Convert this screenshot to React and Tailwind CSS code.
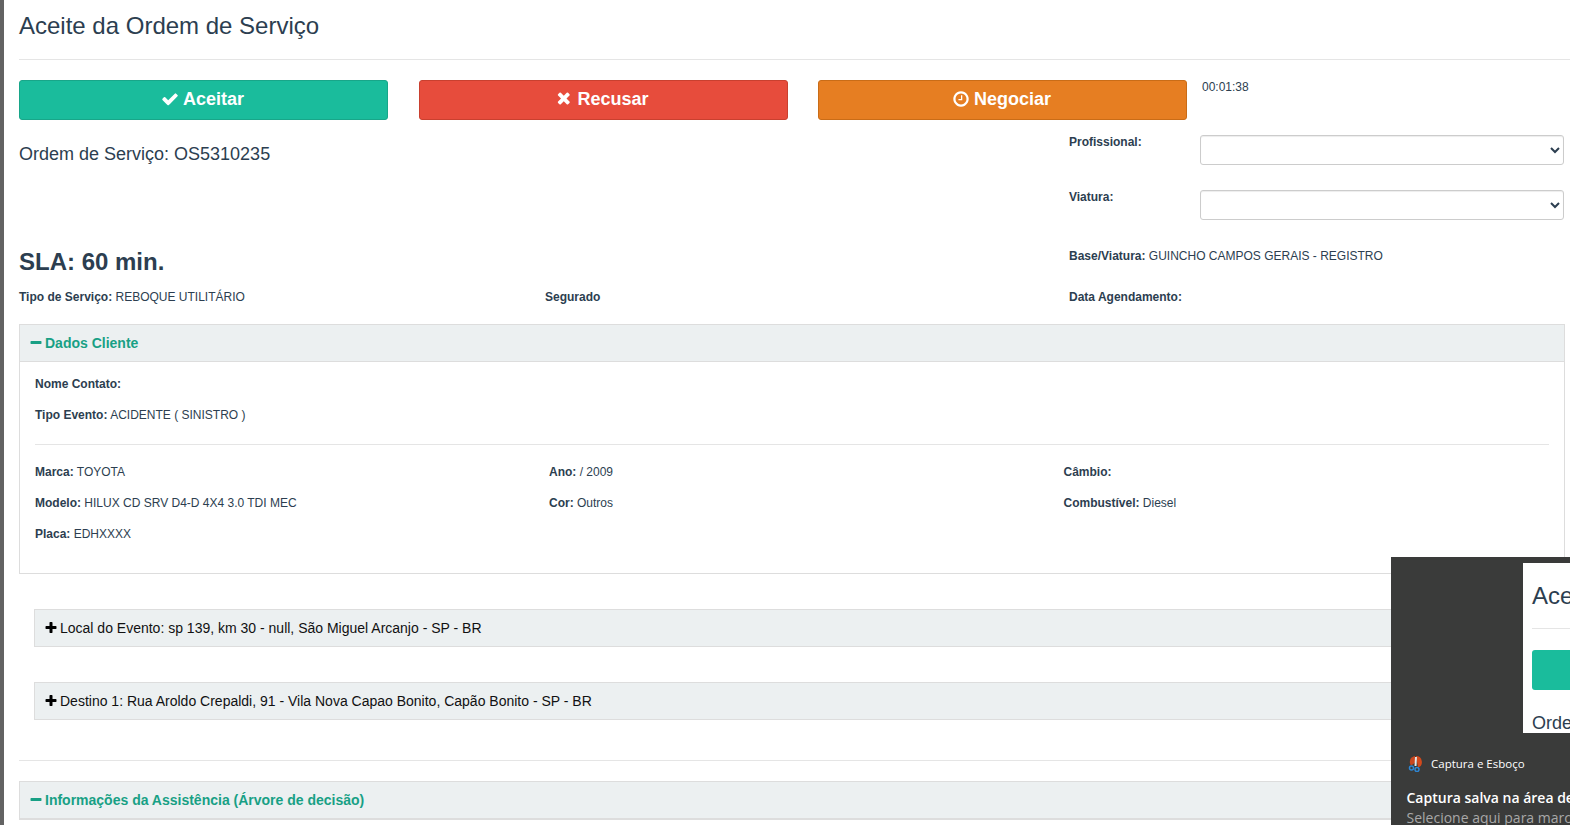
const FaIcon = ({ d, size, box = '0 0 1792 1792', className = '' }) => (
  <svg width={size} height={size} viewBox={box} fill="currentColor" className={`shrink-0 ${className}`}>
    <path d={d} />
  </svg>
);

const checkPath = 'M1671 566q0 40-28 68l-724 724-136 136q-28 28-68 28t-68-28l-136-136-362-362q-28-28-28-68t28-68l136-136q28-28 68-28t68 28l294 295 656-657q28-28 68-28t68 28l136 136q28 28 28 68z';
const timesPath = 'M1298 1214q0 40-28 68l-136 136q-28 28-68 28t-68-28l-294-294-294 294q-28 28-68 28t-68-28l-136-136q-28-28-28-68t28-68l294-294-294-294q-28-28-28-68t28-68l136-136q28-28 68-28t68 28l294 294 294-294q28-28 68-28t68 28l136 136q28 28 28 68t-28 68l-294 294 294 294q28 28 28 68z';
const clockPath = 'M896 544v448q0 14-9 23t-23 9h-320q-14 0-23-9t-9-23v-64q0-14 9-23t23-9h224v-352q0-14 9-23t23-9h64q14 0 23 9t9 23zm416 352q0-148-73-273t-198-198-273-73-273 73-198 198-73 273 73 273 198 198 273 73 273-73 198-198 73-273zm224 0q0 209-103 385.500t-279.500 279.500-385.500 103-385.500-103-279.500-279.500-103-385.500 103-385.500 279.500-279.500 385.500-103 385.500 103 279.500 279.500 103 385.500z';
const plusPath = 'M1600 736v192q0 40-28 68t-68 28h-416v416q0 40-28 68t-68 28h-192q-40 0-68-28t-28-68v-416h-416q-40 0-68-28t-28-68v-192q0-40 28-68t68-28h416v-416q0-40 28-68t68-28h192q40 0 68 28t28 68v416h416q40 0 68 28t28 68z';
const minusPath = 'M1600 736v192q0 40-28 68t-68 28h-1216q-40 0-68-28t-28-68v-192q0-40 28-68t68-28h1216q40 0 68 28t28 68z';

const Label = ({ label, value }) => (
  <div className="h-[31px] leading-[17px]">
    <strong className="font-bold">{label}</strong>{value ? ` ${value}` : ''}
  </div>
);

const ActionButton = ({ icon, text, className }) => (
  <button className={`w-[369px] h-[40px] mr-[30.5px] shrink-0 rounded-[3px] border text-white text-[18px] font-bold flex items-center justify-center gap-[4px] pb-[2px] pr-[2px] ${className}`}>
    {icon}
    {text}
  </button>
);

const SelectBox = () => (
  <select className="w-[364px] h-[30px] border border-[#cccccc] rounded-[3px] bg-white shadow-[inset_0_1px_1px_rgba(0,0,0,0.075)]" />
);

const CollapseBar = ({ text, className }) => (
  <div className={`mx-[15px] h-[38px] bg-[#ecf0f1] border border-[#dddddd] flex items-center pl-[9px] text-[14px] text-[#111111] ${className}`}>
    <FaIcon d={plusPath} size={14} className="mr-[2px] text-black" />
    {text}
  </div>
);

const SectionHeader = ({ title }) => (
  <div className="h-[37px] bg-[#ecf0f1] border-b border-[#dddddd] flex items-center pl-[9px] text-[14px] font-bold text-[#18a085]">
    <FaIcon d={minusPath} size={14} className="mr-[2px]" />
    {title}
  </div>
);

export default function App() {
  return (
    <div className="relative flex h-[825px] w-[1570px] overflow-hidden bg-white text-[12px] text-[#2c3e50] font-['Liberation_Sans',Arial,sans-serif]">
      <div className="w-[4px] shrink-0 bg-[#636363]" />

      <div className="flex-1 min-w-0">
        <div className="h-[60px] ml-[15px] border-b border-[#e5e5e5] flex items-center">
          <h4 className="text-[24px] font-normal relative -top-[4px]">Aceite da Ordem de Serviço</h4>
        </div>

        <div className="flex pl-[15px] mt-[20px] h-[40px]">
          <ActionButton className="bg-[#1abc9c] border-[#18a689]" icon={<FaIcon d={checkPath} size={18} />} text="Aceitar" />
          <ActionButton className="bg-[#e74c3c] border-[#c9402f]" icon={<FaIcon d={timesPath} size={18} box="150 0 1152 1792" />} text="Recusar" />
          <ActionButton className="bg-[#e67e22] border-[#c96c17]" icon={<FaIcon d={clockPath} size={18} box="0 0 1536 1792" />} text="Negociar" />
          <div className="-ml-[15.5px] leading-[14px]">00:01:38</div>
        </div>

        <div className="flex pl-[15px]">
          <div className="w-[1050px] shrink-0">
            <div className="text-[18px] leading-[20px] mt-[24px]">Ordem de Serviço: OS5310235</div>
            <div className="text-[24px] font-bold leading-[28px] mt-[84px]">SLA: 60 min.</div>
          </div>
          <div className="flex-1">
            <div className="flex mt-[15px] h-[55px]">
              <strong className="w-[131px] font-bold leading-[14px]">Profissional:</strong>
              <SelectBox />
            </div>
            <div className="flex h-[55px]">
              <strong className="w-[131px] font-bold leading-[14px]">Viatura:</strong>
              <SelectBox />
            </div>
            <div className="leading-[14px] mt-[4px]">
              <strong className="font-bold">Base/Viatura:</strong> GUINCHO CAMPOS GERAIS - REGISTRO
            </div>
          </div>
        </div>

        <div className="flex pl-[15px] mt-[14px] h-[14px] leading-[14px]">
          <div className="w-[526px]"><strong className="font-bold">Tipo de Serviço:</strong> REBOQUE UTILITÁRIO</div>
          <div className="w-[524px] font-bold">Segurado</div>
          <div className="font-bold">Data Agendamento:</div>
        </div>

        <div className="ml-[15px] mr-[5px] mt-[20px] h-[250px] border border-[#dddddd]">
          <SectionHeader title="Dados Cliente" />
          <div className="px-[15px] pt-[14px]">
            <Label label="Nome Contato:" />
            <Label label="Tipo Evento:" value="ACIDENTE ( SINISTRO )" />
            <div className="border-t border-[#e5e5e5] mt-[6px] mb-[19px]" />
            <div className="grid grid-cols-[514px_514.5px_1fr]">
              <div>
                <Label label="Marca:" value="TOYOTA" />
                <Label label="Modelo:" value="HILUX CD SRV D4-D 4X4 3.0 TDI MEC" />
                <Label label="Placa:" value="EDHXXXX" />
              </div>
              <div>
                <Label label="Ano:" value="/ 2009" />
                <Label label="Cor:" value="Outros" />
              </div>
              <div>
                <Label label="Câmbio:" />
                <Label label="Combustível:" value="Diesel" />
              </div>
            </div>
          </div>
        </div>

        <div className="ml-[15px] mr-[5px]">
          <CollapseBar className="mt-[35px]" text="Local do Evento: sp 139, km 30 - null, São Miguel Arcanjo - SP - BR" />
          <CollapseBar className="mt-[35px]" text="Destino 1: Rua Aroldo Crepaldi, 91 - Vila Nova Capao Bonito, Capão Bonito - SP - BR" />
        </div>

        <div className="ml-[15px] border-t border-[#e5e5e5] mt-[40px]" />

        <div className="ml-[15px] mr-[5px] mt-[20px] border border-[#dddddd]">
          <SectionHeader title="Informações da Assistência (Árvore de decisão)" />
        </div>
      </div>

      <div className="absolute left-[1391px] top-[557px] w-[179px] h-[268px] bg-[#3a3b3a] overflow-hidden font-['Open_Sans',sans-serif]">
        <div className="absolute left-[132px] top-[6px] w-[60px] h-[170px] bg-white overflow-hidden font-['Liberation_Sans',sans-serif] text-[#2c3e50]">
          <div className="absolute left-[9px] top-[15px] text-[24px] leading-[36px]">Ace</div>
          <div className="absolute left-[9px] top-[65px] w-[60px] border-t border-[#e5e5e5]" />
          <div className="absolute left-[9px] top-[87px] w-[60px] h-[40px] rounded-[3px] bg-[#1abc9c]" />
          <div className="absolute left-[9px] top-[148px] text-[18px] leading-[24px]">Orde</div>
        </div>
        <div className="absolute left-[17px] top-[198px] flex items-center">
          <svg width="15" height="17" viewBox="0 0 15 17">
            <path d="M8 1a6 6 0 0 1 2 11.600L8 1z" fill="#d2491c" />
            <path d="M7 1a6 6 0 0 0-4 9.500L7 8z" fill="#c9471f" />
            <path d="M8 2l-.5 9" stroke="#e6e6e6" strokeWidth="2" />
            <circle cx="3.500" cy="13" r="2" fill="none" stroke="#2f86d2" strokeWidth="1.500" />
            <circle cx="9" cy="14.500" r="2" fill="none" stroke="#2f86d2" strokeWidth="1.500" />
          </svg>
          <span className="ml-[8px] text-[11.5px] text-white whitespace-nowrap">Captura e Esboço</span>
        </div>
        <div className="absolute left-[15.5px] top-[231px] text-[14px] leading-[20px] font-semibold text-white whitespace-nowrap">Captura salva na área de</div>
        <div className="absolute left-[15.5px] top-[251px] text-[14px] leading-[20px] text-[#a8a8a8] whitespace-nowrap">Selecione aqui para marcar</div>
      </div>
    </div>
  );
}
